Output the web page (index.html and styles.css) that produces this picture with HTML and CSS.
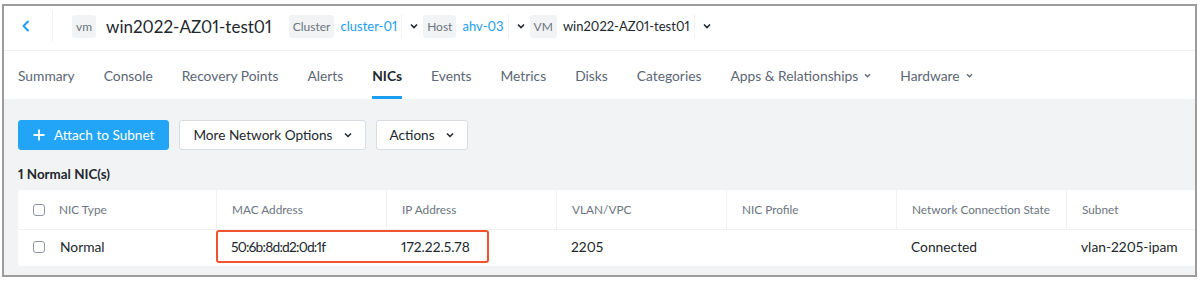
FILE: index.html
```html
<!DOCTYPE html>
<html lang="en">
<head>
<meta charset="UTF-8" />
<title>win2022-AZ01-test01 - NICs</title>
<link rel="stylesheet" href="styles.css">
</head>
<body>
  <div class="frame">
    <header class="topbar">
      <a class="back" href="#" aria-label="Back">
        <svg width="10" height="12" viewBox="0 0 10 12"><path d="M7 1.5 2.5 6 7 10.5" fill="none" stroke="#1b9ef0" stroke-width="2" stroke-linecap="round" stroke-linejoin="round"/></svg>
      </a>
      <span class="vdiv"></span>
      <span class="tag">vm</span>
      <h1 class="title">win2022-AZ01-test01</h1>

      <div class="crumb">
        <span class="tag">Cluster</span>
        <a class="link" href="#">cluster-01</a>
        <span class="vdiv small"></span>
        <span class="caret"><svg width="8" height="6" viewBox="0 0 8 6"><path d="M1 1.5 4 4.5 7 1.5" fill="none" stroke="#22272e" stroke-width="1.6"/></svg></span>
      </div>
      <div class="crumb">
        <span class="tag">Host</span>
        <a class="link" href="#">ahv-03</a>
        <span class="vdiv small"></span>
        <span class="caret"><svg width="8" height="6" viewBox="0 0 8 6"><path d="M1 1.5 4 4.5 7 1.5" fill="none" stroke="#22272e" stroke-width="1.6"/></svg></span>
      </div>
      <div class="crumb">
        <span class="tag">VM</span>
        <span class="plain">win2022-AZ01-test01</span>
        <span class="vdiv small"></span>
        <span class="caret"><svg width="8" height="6" viewBox="0 0 8 6"><path d="M1 1.5 4 4.5 7 1.5" fill="none" stroke="#22272e" stroke-width="1.6"/></svg></span>
      </div>
    </header>

    <nav class="tabs">
      <a href="#">Summary</a>
      <a href="#">Console</a>
      <a href="#">Recovery Points</a>
      <a href="#">Alerts</a>
      <a href="#" class="active">NICs</a>
      <a href="#">Events</a>
      <a href="#">Metrics</a>
      <a href="#">Disks</a>
      <a href="#">Categories</a>
      <a href="#">Apps &amp; Relationships <svg width="7" height="5" viewBox="0 0 8 6"><path d="M1 1.5 4 4.5 7 1.5" fill="none" stroke="#5b6675" stroke-width="1.6"/></svg></a>
      <a href="#">Hardware <svg width="7" height="5" viewBox="0 0 8 6"><path d="M1 1.5 4 4.5 7 1.5" fill="none" stroke="#5b6675" stroke-width="1.6"/></svg></a>
    </nav>

    <main class="content">
      <div class="toolbar">
        <button class="btn primary">
          <svg width="12" height="12" viewBox="0 0 12 12"><path d="M6 0.5v11M0.5 6h11" stroke="#fff" stroke-width="1.8"/></svg>
          Attach to Subnet
        </button>
        <button class="btn">More Network Options
          <svg width="8" height="6" viewBox="0 0 8 6"><path d="M1 1.5 4 4.5 7 1.5" fill="none" stroke="#22272e" stroke-width="1.5"/></svg>
        </button>
        <button class="btn">Actions
          <svg width="8" height="6" viewBox="0 0 8 6"><path d="M1 1.5 4 4.5 7 1.5" fill="none" stroke="#22272e" stroke-width="1.5"/></svg>
        </button>
      </div>

      <div class="count">1 Normal NIC(s)</div>

      <div class="table">
        <div class="row head">
          <div class="cell first"><span class="check"></span>NIC Type</div>
          <div class="cell">MAC Address</div>
          <div class="cell">IP Address</div>
          <div class="cell">VLAN/VPC</div>
          <div class="cell">NIC Profile</div>
          <div class="cell">Network Connection State</div>
          <div class="cell last">Subnet</div>
        </div>
        <div class="row body">
          <div class="cell first"><span class="check"></span>Normal</div>
          <div class="cell mac">50:6b:8d:d2:0d:1f</div>
          <div class="cell">172.22.5.78</div>
          <div class="cell">2205</div>
          <div class="cell"></div>
          <div class="cell">Connected</div>
          <div class="cell last">vlan-2205-ipam</div>
          <span class="highlight"></span>
        </div>
      </div>
    </main>
  </div>
</body>
</html>
```

FILE: styles.css
```css
* {
  box-sizing: border-box;
}
body {
  margin: 0;
  background: #fff;
  font-family: Lato, 'Open Sans', sans-serif;
  font-variant-numeric: proportional-nums;
  color: #22272e;
  -webkit-font-smoothing: antialiased;
}
button {
  font-variant-numeric: proportional-nums;
}

.frame {
  margin: 4px 3px 4px 2px;
  height: 273px;
  border: 2px solid #9c9c9c;
  overflow: hidden;
  display: flex;
  flex-direction: column;
}

/* top breadcrumb bar */
.topbar {
  height: 45px;
  display: flex;
  align-items: center;
  padding: 0 0 4px 17px;
  border-bottom: 1px solid #eceef1;
}
.back {
  display: flex;
  width: 12px;
}
.vdiv {
  width: 1px;
  height: 30px;
  background: #f0f1f3;
  margin: 0 19px;
}
.vdiv.small {
  height: 24px;
  margin: 0 8px 0 4px;
}
.tag {
  background: #f2f3f5;
  color: #6b7480;
  font-size: 12px;
  height: 23px;
  line-height: 23px;
  padding: 0 4px;
  border-radius: 3px;
}
.title {
  margin: 0 17px 0 10px;
  font-size: 17px;
  font-weight: 400;
}
.crumb {
  display: flex;
  align-items: center;
  margin-right: 5px;
}
.crumb .link,
.crumb .plain {
  margin-left: 6px;
  font-size: 13px;
  text-decoration: none;
}
.crumb .link {
  color: #1b9ef0;
}
.caret {
  display: flex;
}

/* tabs */
.tabs {
  height: 48px;
  display: flex;
  align-items: stretch;
  padding-left: 14px;
  gap: 29px;
}
.tabs a {
  display: flex;
  align-items: center;
  gap: 6px;
  font-size: 13.8px;
  color: #5b6675;
  text-decoration: none;
  border-bottom: 3px solid transparent;
  padding-top: 3px;
}
.tabs a.active {
  color: #22272e;
  font-weight: 700;
  border-bottom-color: #1b9ef0;
}

/* content */
.content {
  flex: 1;
  background: #f2f3f5;
  padding: 21px 0 0 14px;
}
.toolbar {
  display: flex;
  gap: 10px;
}
.btn {
  height: 30px;
  display: flex;
  align-items: center;
  gap: 11px;
  padding: 0 13px;
  font-family: inherit;
  font-size: 13.6px;
  color: #22272e;
  background: #fff;
  border: 1px solid #d9dce1;
  border-radius: 3px;
}
.btn.primary {
  background: #22a5f7;
  border-color: #22a5f7;
  color: #fff;
  gap: 9px;
  padding: 0 14px;
}
.count {
  margin: 16px 0 0;
  height: 21px;
  font-size: 13.4px;
  font-weight: 700;
}
.table {
  margin-top: 3px;
  background: #fff;
  border-radius: 3px 0 0 3px;
  width: 1400px;
}
.row {
  position: relative;
  display: flex;
}
.row.head {
  height: 40px;
  border-bottom: 1px solid #f0f1f3;
  font-size: 11.8px;
  color: #6b7480;
}
.row.body {
  height: 36px;
  padding-bottom: 3px;
  font-size: 13.8px;
}
.cell {
  flex: 0 0 170px;
  display: flex;
  align-items: center;
  padding-left: 15px;
}
.row.head .cell + .cell {
  border-left: 1px solid #f0f1f3;
}
.cell.first {
  flex-basis: 198px;
}
.cell.last {
  flex-basis: 300px;
}
.cell.mac {
  letter-spacing: -0.8px;
}
.check {
  width: 12px;
  height: 12px;
  border: 1.5px solid #8d96a1;
  border-radius: 3px;
  margin-right: 15px;
}
.row.head .check {
  margin-right: 14px;
}
.highlight {
  position: absolute;
  left: 198px;
  top: 0;
  width: 273px;
  height: 33px;
  border: 2px solid #f2522e;
  border-radius: 3px;
}
```
